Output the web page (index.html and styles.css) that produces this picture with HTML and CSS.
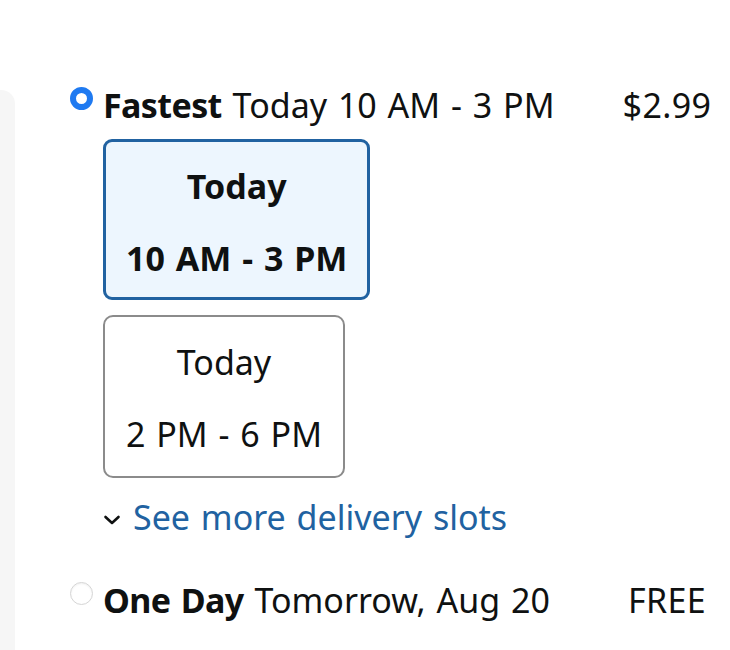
FILE: index.html
```html
<!DOCTYPE html>
<html>
<head>
<meta charset="utf-8">
<link rel="stylesheet" href="styles.css">
</head>
<body>
<div class="page">
  <div class="side-panel"></div>
  <div class="options">
    <div class="option">
      <span class="radio radio-checked"></span>
      <div class="option-body">
        <div class="option-title"><b>Fastest</b> Today 10 AM - 3 PM</div>
        <div class="slots">
          <div class="slot slot-selected">
            <div class="slot-line">Today</div>
            <div class="slot-line">10 AM - 3 PM</div>
          </div>
          <div class="slot">
            <div class="slot-line">Today</div>
            <div class="slot-line">2 PM - 6 PM</div>
          </div>
        </div>
        <a class="more-link" href="#">
          <svg class="chevron" width="18" height="12" viewBox="0 0 18 12"><path d="M2.5 3 L9 9 L15.5 3" fill="none" stroke="#0f1111" stroke-width="2.6" stroke-linecap="round" stroke-linejoin="round"/></svg>
          <span>See more delivery slots</span>
        </a>
      </div>
      <div class="price">$2.99</div>
    </div>
    <div class="option option-second">
      <span class="radio"></span>
      <div class="option-body">
        <div class="option-title"><b>One Day</b> Tomorrow, Aug 20</div>
      </div>
      <div class="price">FREE</div>
    </div>
  </div>
</div>
</body>
</html>
```
FILE: styles.css
```css
* { box-sizing: border-box; }
html, body {
  margin: 0;
  padding: 0;
  background: #ffffff;
}
body {
  font-family: "Noto Sans", "Open Sans", sans-serif;
  font-size: 34px;
  word-spacing: 2px;
  color: #0f1111;
  width: 730px;
  height: 650px;
  overflow: hidden;
}
.page {
  display: flex;
  height: 650px;
}
.side-panel {
  width: 15px;
  margin-top: 90px;
  background: #f6f6f6;
  border-top-right-radius: 14px;
  flex: none;
}
.options {
  flex: 1;
  padding-left: 55px;
  padding-top: 84px;
}
.option {
  display: grid;
  grid-template-columns: 23px 1fr 126px;
  column-gap: 10px;
  align-items: start;
}
.radio {
  width: 23px;
  height: 23px;
  border-radius: 50%;
  border: 1px solid #d5d5d5;
  margin-top: 3px;
  background: #fff;
  box-shadow: inset 0 1px 2px rgba(0, 0, 0, 0.06);
}
.radio-checked {
  border: 6px solid #1f7af1;
  box-shadow: none;
}
.option-title {
  line-height: 42px;
  white-space: nowrap;
}
.option-title b {
  font-weight: 700;
  letter-spacing: -0.6px;
}
.price {
  line-height: 42px;
  text-align: center;
  letter-spacing: 0.4px;
}
.slots {
  display: flex;
  flex-direction: column;
  align-items: flex-start;
  gap: 15px;
  margin-top: 13px;
}
.slot {
  border: 2px solid #8b8b8b;
  border-radius: 10px;
  padding: 9px 21px 6px;
  text-align: center;
}
.slot-line {
  line-height: 72px;
  white-space: nowrap;
}
.slot-selected {
  border: 3px solid #2162a1;
  border-radius: 9px;
  background: #edf6fe;
  padding: 8px 20px 3px;
  font-weight: 700;
}
.more-link {
  display: flex;
  align-items: center;
  gap: 12px;
  margin-top: 18px;
  color: #2162a1;
  text-decoration: none;
  line-height: 42px;
}
.chevron { flex: none; margin-top: 6px; }
.option-second {
  margin-top: 41px;
}
```
